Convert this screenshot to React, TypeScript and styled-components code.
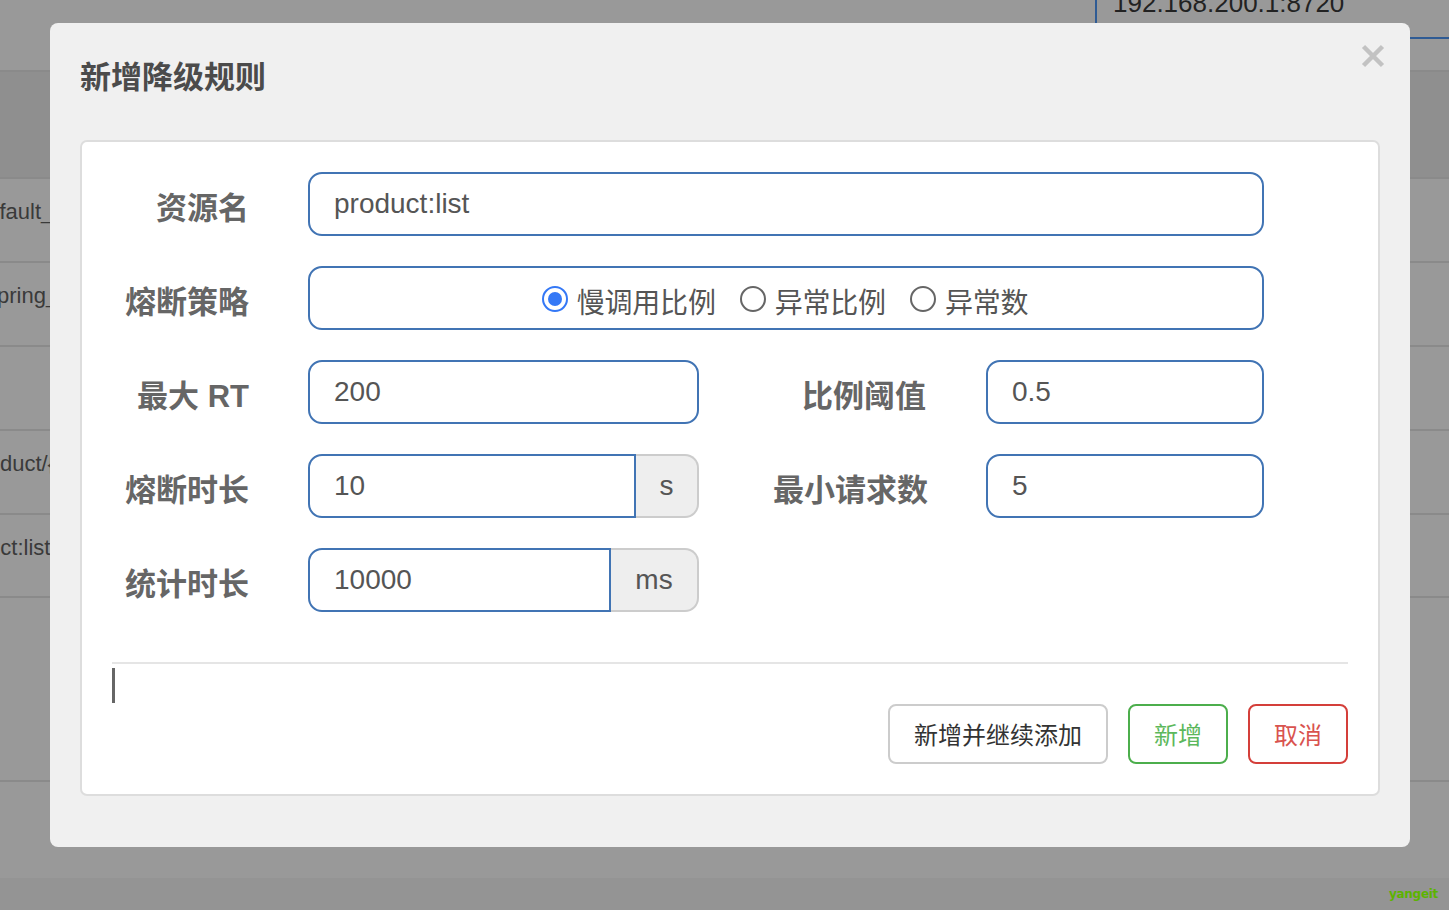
import React from 'react';
import styled, { createGlobalStyle } from 'styled-components';

const GlobalStyle = createGlobalStyle`
  html, body {
    margin: 0;
    padding: 0;
    background: #999999;
    overflow: hidden;
  }
  * {
    box-sizing: border-box;
  }
`;

const FONT = `"Liberation Sans", "Noto Sans CJK SC", sans-serif`;

const Page = styled.div`
  position: relative;
  width: 1449px;
  height: 910px;
  overflow: hidden;
  font-family: ${FONT};
  background: #999999;
`;

const TopBar = styled.div`
  height: 72px;
  border-bottom: 2px solid #8a8a8a;
  display: flex;
`;

const HostBox = styled.div`
  margin-left: 1095px;
  margin-top: -30px;
  height: 69px;
  flex: 1;
  border-left: 2px solid #2f5b94;
  border-bottom: 2px solid #2f5b94;
  padding: 18px 0 0 16px;
  font-size: 26px;
  line-height: 30px;
  color: #222222;
  white-space: nowrap;
`;

const Row = styled.div<{ $h: number; $dark?: boolean }>`
  height: ${(p) => p.$h}px;
  border-bottom: 2px solid #8a8a8a;
  background: ${(p) => (p.$dark ? '#8f8f8f' : '#999999')};
  display: flex;
  align-items: center;
  padding-bottom: 16px;
`;

const CellText = styled.span<{ $shift: number }>`
  font-size: 22px;
  color: #3a3a3a;
  white-space: nowrap;
  margin-left: ${(p) => -p.$shift}px;
`;

const Filler = styled.div`
  height: 96px;
`;

const BottomBand = styled.div`
  height: 32px;
  background: #949494;
  display: flex;
  justify-content: flex-end;
  align-items: center;
  padding: 0 11px 0 0;
`;

const Watermark = styled.span`
  font-family: "DejaVu Sans", sans-serif;
  font-size: 12px;
  font-weight: bold;
  letter-spacing: -0.3px;
  color: #5cb300;
`;

const Dialog = styled.div`
  position: absolute;
  left: 50px;
  top: 23px;
  width: 1360px;
  height: 824px;
  background: #f0f0f0;
  border-radius: 8px;
  display: flex;
  flex-direction: column;
`;

const DialogHeader = styled.div`
  height: 117px;
  display: flex;
  justify-content: space-between;
  align-items: flex-start;
  padding: 21px 25px 0 30px;
`;

const Title = styled.h4`
  margin: 18px 0 0;
  font-size: 31px;
  line-height: 31px;
  font-weight: bold;
  color: #4b4b4b;
`;

const CloseButton = styled.button`
  width: 24px;
  height: 24px;
  padding: 0;
  border: none;
  background: none;
  display: flex;
`;

const Card = styled.div`
  margin: 0 30px;
  background: #ffffff;
  border: 2px solid #dddddd;
  border-radius: 7px;
  padding: 30px 30px 30px;
`;

const FormRow = styled.div`
  display: flex;
  align-items: center;
  height: 64px;
  margin-bottom: 30px;
  &:last-of-type {
    margin-bottom: 0;
  }
`;

const Label = styled.label<{ $w?: number; $gap?: number }>`
  width: ${(p) => p.$w ?? 137}px;
  margin-right: ${(p) => p.$gap ?? 59}px;
  flex-shrink: 0;
  text-align: right;
  font-size: 31px;
  font-weight: bold;
  color: #666666;
  white-space: nowrap;
  padding-top: 2px;
`;

const TextInput = styled.input<{ $w?: number; $addon?: boolean }>`
  width: ${(p) => (p.$w ? `${p.$w}px` : 'auto')};
  flex: ${(p) => (p.$w ? 'none' : '1')};
  min-width: 0;
  height: 64px;
  border: 2px solid #4174b4;
  border-radius: ${(p) => (p.$addon ? '14px 0 0 14px' : '14px')};
  padding: 0 24px;
  font-family: ${FONT};
  font-size: 28px;
  color: #555555;
  background: #ffffff;
  outline: none;
`;

const InputGroup = styled.div<{ $w: number }>`
  display: flex;
  width: ${(p) => p.$w}px;
  flex-shrink: 0;
`;

const Addon = styled.span<{ $w: number }>`
  width: ${(p) => p.$w}px;
  height: 64px;
  flex-shrink: 0;
  background: #eeeeee;
  border: 2px solid #cccccc;
  border-left: none;
  border-radius: 0 14px 14px 0;
  display: flex;
  align-items: center;
  justify-content: center;
  font-size: 28px;
  color: #555555;
`;

const RadioBox = styled.div`
  width: 956px;
  height: 64px;
  border: 2px solid #4174b4;
  border-radius: 14px;
  display: flex;
  align-items: center;
  justify-content: center;
  padding: 5px 2px 0 0;
`;

const RadioOption = styled.span`
  display: flex;
  align-items: center;
  margin-right: 24px;
  font-family: "Noto Sans CJK SC", sans-serif;
  font-size: 28px;
  letter-spacing: -0.2px;
  color: #555555;
  &:last-child {
    margin-right: 0;
  }
`;

const RadioMark = styled.span<{ $on?: boolean }>`
  width: 26px;
  height: 26px;
  margin-top: -3px;
  border-radius: 50%;
  border: 2px solid ${(p) => (p.$on ? '#3478f6' : '#666666')};
  margin-right: 9px;
  display: flex;
  align-items: center;
  justify-content: center;
  &::after {
    content: '';
    width: 14px;
    height: 14px;
    border-radius: 50%;
    background: ${(p) => (p.$on ? '#3478f6' : 'transparent')};
  }
`;

const Divider = styled.div`
  height: 2px;
  background: #e5e5e5;
  margin-top: 50px;
`;

const Caret = styled.div`
  width: 3px;
  height: 35px;
  margin-top: 4px;
  background: #666666;
`;

const ButtonRow = styled.div`
  display: flex;
  justify-content: flex-end;
  gap: 20px;
  margin-top: 1px;
`;

const tones = {
  default: { border: '#cccccc', text: '#333333' },
  success: { border: '#4cae4c', text: '#5cb85c' },
  danger: { border: '#d43f3a', text: '#d9534f' },
};

const Button = styled.button<{ $tone: keyof typeof tones; $w: number }>`
  width: ${(p) => p.$w}px;
  height: 60px;
  background: #ffffff;
  border: 2px solid ${(p) => tones[p.$tone].border};
  border-radius: 8px;
  font-family: "Noto Sans CJK SC", sans-serif;
  font-size: 24px;
  color: ${(p) => tones[p.$tone].text};
  padding: 0 0 2px;
`;

const tableRows = [
  { h: 84, text: 'default_context', shift: 25 },
  { h: 84, text: 'spring_mvc_context', shift: 14 },
  { h: 84, text: '', shift: 0 },
  { h: 84, text: '/product/{id}', shift: 38 },
  { h: 83, text: 'product:list', shift: 56 },
  { h: 184, text: '', shift: 0 },
];

export default function App() {
  return (
    <>
      <GlobalStyle />
      <Page>
        <TopBar>
          <HostBox>192.168.200.1:8720</HostBox>
        </TopBar>
        <Row $h={107} $dark />
        {tableRows.map((r, i) => (
          <Row key={i} $h={r.h}>
            <CellText $shift={r.shift}>{r.text}</CellText>
          </Row>
        ))}
        <Filler />
        <BottomBand>
          <Watermark>yangeit</Watermark>
        </BottomBand>

        <Dialog>
          <DialogHeader>
            <Title>新增降级规则</Title>
            <CloseButton aria-label="close">
              <svg width="24" height="24" viewBox="0 0 24 24">
                <path d="M2.5 2.5 L21.5 21.5 M21.5 2.5 L2.5 21.5" stroke="#c2c2c2" strokeWidth="4.5" strokeLinecap="butt" />
              </svg>
            </CloseButton>
          </DialogHeader>

          <Card>
            <FormRow>
              <Label>资源名</Label>
              <TextInput $w={956} readOnly value="product:list" />
            </FormRow>
            <FormRow>
              <Label>熔断策略</Label>
              <RadioBox>
                <RadioOption>
                  <RadioMark $on />
                  慢调用比例
                </RadioOption>
                <RadioOption>
                  <RadioMark />
                  异常比例
                </RadioOption>
                <RadioOption>
                  <RadioMark />
                  异常数
                </RadioOption>
              </RadioBox>
            </FormRow>
            <FormRow>
              <Label>最大 RT</Label>
              <TextInput $w={391} readOnly value="200" />
              <Label $w={227} $gap={60}>比例阈值</Label>
              <TextInput $w={278} readOnly value="0.5" />
            </FormRow>
            <FormRow>
              <Label>熔断时长</Label>
              <InputGroup $w={391}>
                <TextInput $addon readOnly value="10" />
                <Addon $w={63}>s</Addon>
              </InputGroup>
              <Label $w={229} $gap={58}>最小请求数</Label>
              <TextInput $w={278} readOnly value="5" />
            </FormRow>
            <FormRow>
              <Label>统计时长</Label>
              <InputGroup $w={391}>
                <TextInput $addon readOnly value="10000" />
                <Addon $w={88}>ms</Addon>
              </InputGroup>
            </FormRow>

            <Divider />
            <Caret />
            <ButtonRow>
              <Button $tone="default" $w={220}>新增并继续添加</Button>
              <Button $tone="success" $w={100}>新增</Button>
              <Button $tone="danger" $w={100}>取消</Button>
            </ButtonRow>
          </Card>
        </Dialog>
      </Page>
    </>
  );
}
